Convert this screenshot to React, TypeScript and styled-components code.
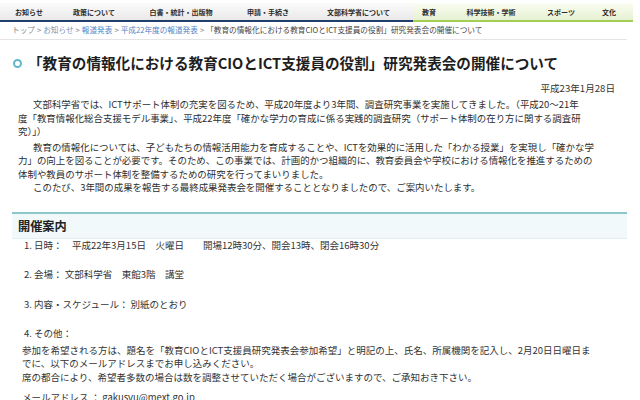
import React from 'react';
import styled, { createGlobalStyle } from 'styled-components';

const GlobalStyle = createGlobalStyle`
  html, body {
    margin: 0;
    padding: 0;
    background: #fff;
  }
  body {
    font-family: "Noto Sans CJK JP", "Noto Sans", sans-serif;
    color: #333;
  }
`;

type Group = 'policy' | 'field';

const tabs: { label: string; width: number; group: Group }[] = [
    { label: 'お知らせ', width: 58, group: 'policy' },
    { label: '政策について', width: 72, group: 'policy' },
    { label: '白書・統計・出版物', width: 102, group: 'policy' },
    { label: '申請・手続き', width: 72, group: 'policy' },
    { label: '文部科学省について', width: 109, group: 'policy' },
    { label: '教育', width: 32, group: 'field' },
    { label: '科学技術・学術', width: 92, group: 'field' },
    { label: 'スポーツ', width: 48, group: 'field' },
    { label: '文化', width: 48, group: 'field' },
];

const crumbs: { label: string; tone: 'gray' | 'visited' | 'link' }[] = [
    { label: 'トップ', tone: 'gray' },
    { label: 'お知らせ', tone: 'visited' },
    { label: '報道発表', tone: 'link' },
    { label: '平成22年度の報道発表', tone: 'link' },
];

const TITLE = '「教育の情報化における教育CIOとICT支援員の役割」研究発表会の開催について';

export default function App() {
    return (
        <>
            <GlobalStyle />
            <Page>
                <Nav>
                    {tabs.map((t) => (
                        <Tab key={t.label} $width={t.width} $group={t.group}>{t.label}</Tab>
                    ))}
                </Nav>

                <Breadcrumb>
                    {crumbs.map((c) => (
                        <React.Fragment key={c.label}>
                            <Crumb $tone={c.tone}>{c.label}</Crumb>
                            <Sep>&gt;</Sep>
                        </React.Fragment>
                    ))}
                    <Current>{TITLE}</Current>
                </Breadcrumb>

                <TitleRow>
                    <Ring />
                    <Title>{TITLE}</Title>
                </TitleRow>
                <DateLine>平成23年1月28日</DateLine>

                <Intro>
                    <Para $gap={2}>
                        文部科学省では、ICTサポート体制の充実を図るため、平成20年度より3年間、調査研究事業を実施してきました。（平成20～21年<br />
                        度「教育情報化総合支援モデル事業」、平成22年度「確かな学力の育成に係る実践的調査研究（サポート体制の在り方に関する調査研<br />
                        究）」）
                    </Para>
                    <Para>
                        教育の情報化については、子どもたちの情報活用能力を育成することや、ICTを効果的に活用した「わかる授業」を実現し「確かな学<br />
                        力」の向上を図ることが必要です。そのため、この事業では、計画的かつ組織的に、教育委員会や学校における情報化を推進するための<br />
                        体制や教員のサポート体制を整備するための研究を行ってまいりました。
                    </Para>
                    <Para>
                        このたび、3年間の成果を報告する最終成果発表会を開催することとなりましたので、ご案内いたします。
                    </Para>
                </Intro>

                <Section>
                    <SectionHead>開催案内</SectionHead>
                    <List>
                        <Item>1. 日時：　平成22年3月15日　火曜日　　開場12時30分、開会13時、閉会16時30分</Item>
                        <Item>2. 会場： 文部科学省　東館3階　講堂</Item>
                        <Item>3. 内容・スケジュール： 別紙のとおり</Item>
                        <Item>
                            4. その他：
                            <Detail>
                                参加を希望される方は、題名を「教育CIOとICT支援員研究発表会参加希望」と明記の上、氏名、所属機関を記入し、2月20日日曜日ま<br />
                                でに、以下のメールアドレスまでお申し込みください。<br />
                                席の都合により、希望者多数の場合は数を調整させていただく場合がございますので、ご承知おき下さい。
                            </Detail>
                            <Mail>メールアドレス ： gakusyu@mext.go.jp</Mail>
                        </Item>
                    </List>
                </Section>
            </Page>
        </>
    );
}

const Page = styled.div`
    width: 640px;
    height: 400px;
    overflow: hidden;
`;

const Nav = styled.nav`
    display: flex;
    width: 633px;
    margin-top: 3px;
`;

const Tab = styled.div<{ $width: number; $group: Group }>`
    width: ${(p) => p.$width}px;
    height: 17px;
    display: flex;
    align-items: center;
    justify-content: center;
    font-size: 7px;
    font-weight: 700;
    color: #2b2b2b;
    white-space: nowrap;
    background: ${(p) => p.$group === 'policy'
        ? 'linear-gradient(#fbfbfb, #e9e9e9)'
        : 'linear-gradient(#fafdf2, #e6f1d2)'};
    border-bottom: 2px solid ${(p) => (p.$group === 'policy' ? '#203f6d' : '#a3cf55')};
`;

const Breadcrumb = styled.div`
    margin-right: 13px;
    padding: 2px 0 4px 12px;
    font-size: 7.65px;
    line-height: 11px;
    border-bottom: 1px solid #e4e4e4;
    white-space: nowrap;
`;

const Crumb = styled.span<{ $tone: 'gray' | 'visited' | 'link' }>`
    color: ${(p) => ({ gray: '#7f8891', visited: '#7d8fae', link: '#4f86c6' }[p.$tone])};
`;

const Sep = styled.span`
    color: #777;
    margin: 0 2px;
`;

const Current = styled.span`
    color: #444;
`;

const TitleRow = styled.div`
    display: flex;
    align-items: center;
    margin-top: 13px;
    padding-left: 13px;
`;

const Ring = styled.span`
    box-sizing: border-box;
    width: 9px;
    height: 9px;
    margin-right: 6px;
    border-radius: 50%;
    border: 2.5px solid #62b7ca;
    background: #fff;
    flex-shrink: 0;
`;

const Title = styled.h1`
    margin: 0;
    font-size: 14.6px;
    line-height: 20px;
    font-weight: 700;
    color: #1e1e1e;
    white-space: nowrap;
`;

const DateLine = styled.div`
    margin-top: 8px;
    padding-right: 25px;
    text-align: right;
    font-size: 9.6px;
    line-height: 14px;
    color: #333;
`;

const Intro = styled.div`
    margin-top: 3px;
    padding: 0 10px 0 18px;
    font-size: 9.45px;
    line-height: 13.5px;
    color: #2e2e2e;
`;

const Para = styled.p<{ $gap?: number }>`
    margin: 0 0 ${(p) => p.$gap ?? 0}px;
    text-indent: 15px;
    white-space: nowrap;
`;

const Section = styled.section`
    margin: 17px 13px 0 12px;
    border-top: 2px solid #8bc7cc;
`;

const SectionHead = styled.h2`
    margin: 0;
    padding-left: 6px;
    height: 24px;
    line-height: 24px;
    font-size: 12.2px;
    font-weight: 700;
    color: #222;
    background: #f1f9fa;
    border-bottom: 1px solid #e2eff1;
`;

const List = styled.div`
    padding: 0 0 0 12px;
    font-size: 9.5px;
    line-height: 13.5px;
    color: #333;
`;

const Item = styled.div`
    margin-bottom: 16px;
    white-space: nowrap;
`;

const Detail = styled.div`
    margin: 3px 0 0 -2px;
`;

const Mail = styled.div`
    margin: 7px 0 0 -2px;
`;
